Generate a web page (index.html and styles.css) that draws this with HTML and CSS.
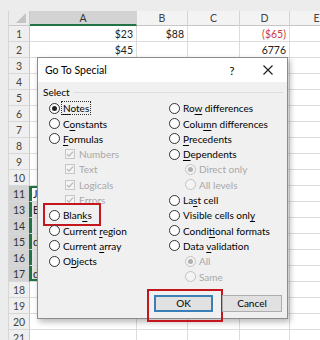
FILE: index.html
```html
<!DOCTYPE html>
<html>
<head>
<meta charset="utf-8">
<link rel="stylesheet" href="styles.css">
</head>
<body>
<div class="topbar"></div>
<div class="sheet">
  <div class="gutter"></div>
  <div class="grid">
    <div class="corner"><span class="tri"></span></div>
    <div class="ch sel">A</div><div class="ch">B</div><div class="ch">C</div><div class="ch">D</div><div class="ch">E</div>

    <div class="rh">1</div><div class="c num">$23</div><div class="c num">$88</div><div class="c"></div><div class="c num neg">($65)</div><div class="c"></div>
    <div class="rh">2</div><div class="c num">$45</div><div class="c"></div><div class="c"></div><div class="c num">6776</div><div class="c"></div>
    <div class="rh">3</div><div class="c"></div><div class="c"></div><div class="c"></div><div class="c"></div><div class="c"></div>
    <div class="rh">4</div><div class="c"></div><div class="c"></div><div class="c"></div><div class="c"></div><div class="c"></div>
    <div class="rh">5</div><div class="c"></div><div class="c"></div><div class="c"></div><div class="c"></div><div class="c"></div>
    <div class="rh">6</div><div class="c"></div><div class="c"></div><div class="c"></div><div class="c"></div><div class="c"></div>
    <div class="rh">7</div><div class="c"></div><div class="c"></div><div class="c"></div><div class="c"></div><div class="c"></div>
    <div class="rh">8</div><div class="c"></div><div class="c"></div><div class="c"></div><div class="c"></div><div class="c"></div>
    <div class="rh">9</div><div class="c"></div><div class="c"></div><div class="c"></div><div class="c"></div><div class="c"></div>
    <div class="rh">10</div><div class="c"></div><div class="c"></div><div class="c"></div><div class="c"></div><div class="c"></div>
    <div class="rh hs">11</div><div class="c s-top s-left">J</div><div class="c"></div><div class="c"></div><div class="c"></div><div class="c"></div>
    <div class="rh hs">13</div><div class="c s-left tint">B</div><div class="c"></div><div class="c"></div><div class="c"></div><div class="c"></div>
    <div class="rh hs">14</div><div class="c s-left tint"></div><div class="c"></div><div class="c"></div><div class="c"></div><div class="c"></div>
    <div class="rh hs">15</div><div class="c s-left tint">d</div><div class="c"></div><div class="c"></div><div class="c"></div><div class="c"></div>
    <div class="rh hs">16</div><div class="c s-left tint"></div><div class="c"></div><div class="c"></div><div class="c"></div><div class="c"></div>
    <div class="rh hs">17</div><div class="c s-left s-bottom tint">d</div><div class="c"></div><div class="c"></div><div class="c"></div><div class="c"></div>
    <div class="rh">18</div><div class="c"></div><div class="c"></div><div class="c"></div><div class="c"></div><div class="c"></div>
    <div class="rh">19</div><div class="c"></div><div class="c"></div><div class="c"></div><div class="c"></div><div class="c"></div>
    <div class="rh">20</div><div class="c"></div><div class="c"></div><div class="c"></div><div class="c"></div><div class="c"></div>
    <div class="rh">21</div><div class="c"></div><div class="c"></div><div class="c"></div><div class="c"></div><div class="c"></div>
  </div>
</div>

<div class="dialog">
  <div class="titlebar">
    <span class="title">Go To Special</span>
    <span class="help">?</span>
    <span class="close"><svg width="10" height="10" viewBox="0 0 10 10"><path d="M0.5 0.5L9.5 9.5M9.5 0.5L0.5 9.5" stroke="#1a1a1a" stroke-width="1.1" fill="none"/></svg></span>
  </div>
  <div class="body">
    <div class="legend"><span>Select</span></div>
    <div class="cols">
      <div class="col left">
        <div class="opt"><span class="radio on"></span><span class="focus"><u>N</u>otes</span></div>
        <div class="opt"><span class="radio"></span><span>C<u>o</u>nstants</span></div>
        <div class="opt"><span class="radio"></span><span><u>F</u>ormulas</span></div>
        <div class="opt sub dis"><span class="check"><svg width="8" height="8" viewBox="0 0 8 8"><path d="M1 4.2L3 6.2L7 1.6" stroke="#b4b4b4" stroke-width="1.1" fill="none"/></svg></span><span>Numbers</span></div>
        <div class="opt sub dis"><span class="check"><svg width="8" height="8" viewBox="0 0 8 8"><path d="M1 4.2L3 6.2L7 1.6" stroke="#b4b4b4" stroke-width="1.1" fill="none"/></svg></span><span>Text</span></div>
        <div class="opt sub dis"><span class="check"><svg width="8" height="8" viewBox="0 0 8 8"><path d="M1 4.2L3 6.2L7 1.6" stroke="#b4b4b4" stroke-width="1.1" fill="none"/></svg></span><span>Logicals</span></div>
        <div class="opt sub dis"><span class="check"><svg width="8" height="8" viewBox="0 0 8 8"><path d="M1 4.2L3 6.2L7 1.6" stroke="#b4b4b4" stroke-width="1.1" fill="none"/></svg></span><span>Errors</span></div>
        <div class="opt mark-blanks"><span class="radio"></span><span>Blan<u>k</u>s</span></div>
        <div class="opt"><span class="radio"></span><span>Current <u>r</u>egion</span></div>
        <div class="opt"><span class="radio"></span><span>Current <u>a</u>rray</span></div>
        <div class="opt"><span class="radio"></span><span>O<u>b</u>jects</span></div>
      </div>
      <div class="col right">
        <div class="opt"><span class="radio"></span><span>Ro<u>w</u> differences</span></div>
        <div class="opt"><span class="radio"></span><span>Colu<u>m</u>n differences</span></div>
        <div class="opt"><span class="radio"></span><span><u>P</u>recedents</span></div>
        <div class="opt"><span class="radio"></span><span><u>D</u>ependents</span></div>
        <div class="opt sub dis"><span class="radio on"></span><span>Direct only</span></div>
        <div class="opt sub dis"><span class="radio"></span><span>All levels</span></div>
        <div class="opt"><span class="radio"></span><span>La<u>s</u>t cell</span></div>
        <div class="opt"><span class="radio"></span><span>Visible cells onl<u>y</u></span></div>
        <div class="opt"><span class="radio"></span><span>Condi<u>t</u>ional formats</span></div>
        <div class="opt"><span class="radio"></span><span>Data <u>v</u>alidation</span></div>
        <div class="opt sub dis"><span class="radio on"></span><span>All</span></div>
        <div class="opt sub dis"><span class="radio"></span><span>Same</span></div>
      </div>
    </div>
    <div class="buttons">
      <button class="btn ok">OK</button>
      <button class="btn">Cancel</button>
    </div>
  </div>
</div>
</body>
</html>
```
FILE: styles.css
```css
* { box-sizing: border-box; }
body {
  margin: 0;
  width: 320px;
  height: 340px;
  overflow: hidden;
  position: relative;
  background: #fff;
  font-family: Lato, "Noto Sans", sans-serif;
}
.topbar { height: 11px; background: #ececec; }
.sheet { display: flex; width: 320px; overflow: hidden; }
.gutter { flex: none; width: 9px; background: #ececec; border-right: 1px solid #d6d6d6; }
.grid {
  flex: none;
  display: grid;
  grid-template-columns: 21px 107px 51px 52px 50px 54px;
  grid-template-rows: 15px;
  grid-auto-rows: 16px;
  font-size: 10.5px;
  color: #222;
}
.corner { background: #ececec; border-right: 1px solid #c8c8c8; border-bottom: 1px solid #c8c8c8; position: relative; }
.tri {
  position: absolute; right: 3px; bottom: 2px; width: 10px; height: 10px;
  background: #c4c4c4; clip-path: polygon(100% 0, 100% 100%, 0 100%);
}
.ch {
  background: #f3f3f3; color: #444;
  border-right: 1px solid #d4d4d4; border-bottom: 1px solid #c6c6c6;
  display: flex; align-items: center; justify-content: center;
  font-size: 10.5px;
}
.ch.sel { background: #d3d3d3; border-bottom: 2px solid #217346; color: #333; }
.rh {
  background: #efefef; color: #444;
  border-right: 1px solid #c6c6c6; border-bottom: 1px solid #d8d8d8;
  display: flex; align-items: center; justify-content: center;
  font-size: 10.5px;
}
.rh.hs { background: #d4d4d4; color: #333; border-right: 1px solid #217346; }
.c {
  border-right: 1px solid #dcdcdc; border-bottom: 1px solid #dcdcdc;
  display: flex; align-items: center; padding: 0 3px; white-space: nowrap; overflow: hidden;
}
.c.num { justify-content: flex-end; }
.c.neg { color: #d03a3a; }
.c.tint { background: #e4e4e4; }
.s-left { box-shadow: inset 2px 0 0 #217346; }
.s-top.s-left { box-shadow: inset 2px 0 0 #217346, inset 0 2px 0 #217346; }
.s-bottom.s-left { box-shadow: inset 2px 0 0 #217346, inset 0 -2px 0 #217346; }

/* dialog */
.dialog {
  position: absolute; left: 37px; top: 57px; width: 251px; height: 262px;
  z-index: 5;
  border: 1px solid #8c8c8c;
  background: #f0f0f0;
  box-shadow: 2px 3px 6px rgba(0,0,0,0.28);
  display: flex; flex-direction: column;
  font-family: Lato, "Noto Sans", sans-serif;
  font-size: 10px; color: #000;
}
.titlebar {
  height: 24px; background: #fff;
  display: flex; align-items: center;
  padding-left: 7px;
}
.title { flex: 1; font-size: 10.5px; }
.help { width: 20px; text-align: center; font-size: 11px; margin-right: 8px; }
.close { width: 36px; display: flex; justify-content: center; margin-right: 1px; }
.body { flex: 1; padding: 4px 4px 0 5px; display: flex; flex-direction: column; }
.legend { display: flex; align-items: center; height: 12px; }
.legend::after { content: ""; flex: 1; border-top: 1px solid #dedede; margin-left: 4px; }
.cols { display: flex; margin-top: 2.6px; padding-left: 6px; }
.col.left { width: 120px; }
.opt { height: 15.3px; display: flex; align-items: center; gap: 3px; white-space: nowrap; position: relative; }
.opt.sub { padding-left: 16px; }
.opt.dis { color: #a8a8a8; }
.radio {
  width: 11px; height: 11px; border-radius: 50%;
  border: 1px solid #333; background: #fff;
  display: flex; align-items: center; justify-content: center; flex: none;
}
.radio.on::after { content: ""; width: 5px; height: 5px; border-radius: 50%; background: #222; }
.dis .radio { border-color: #c2c2c2; background: #f4f4f4; }
.dis .radio.on::after { background: #b0b0b0; }
.check {
  width: 10px; height: 10px; border: 1px solid #c6c6c6; background: #f4f4f4;
  display: flex; align-items: center; justify-content: center; flex: none; margin-right: 1px;
}
.focus { outline: 1px dotted #333; outline-offset: 0px; padding: 0 1px; margin-left: -1px; }
u { text-underline-offset: 1.5px; }
.mark-blanks::after {
  content: ""; position: absolute; left: -6px; top: -5px; width: 54px; height: 19px;
  border: 2.5px solid #c4161c;
}
.buttons { display: flex; justify-content: flex-end; gap: 9px; margin-top: 10.8px; padding-right: 1px; }
.btn {
  width: 60px; height: 17px; padding: 0;
  font-family: Lato, "Noto Sans", sans-serif; font-size: 10px; color: #000;
  background: #e1e1e1; border: 1px solid #adadad;
  position: relative;
}
.btn.ok { width: 59px; border: 2px solid #3a7fb8; }
.btn.ok::after {
  content: ""; position: absolute; left: -9px; top: -8px; width: 72px; height: 29px;
  border: 2.5px solid #c4161c;
}
```
